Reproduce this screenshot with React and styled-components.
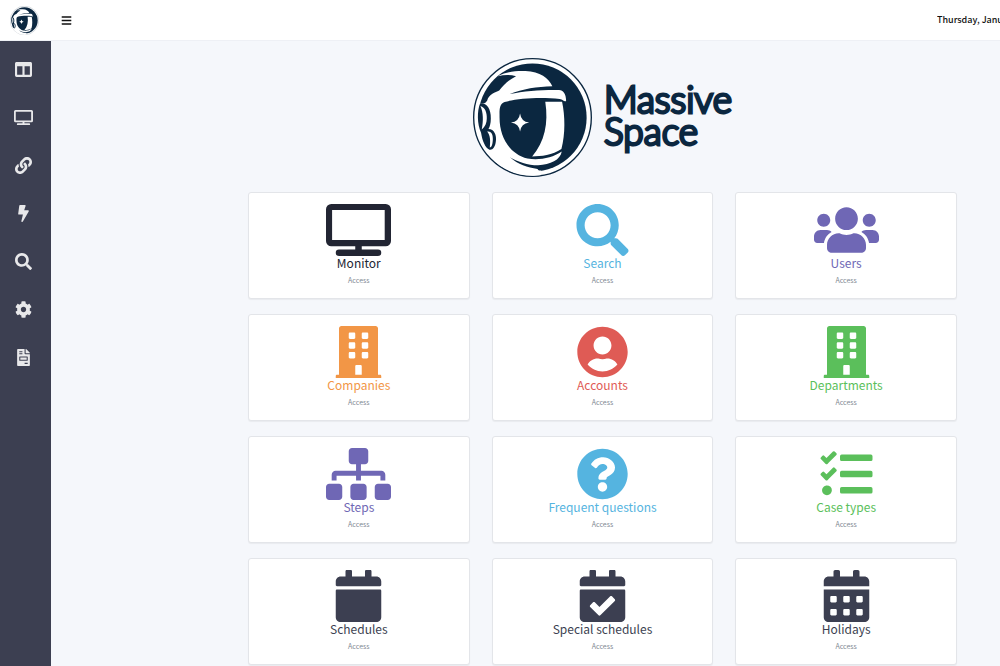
import React from "react";
import styled, { createGlobalStyle } from "styled-components";
import {
  FaBars,
  FaBolt,
  FaBuilding,
  FaCalendar,
  FaCalendarAlt,
  FaCalendarCheck,
  FaCog,
  FaColumns,
  FaFileInvoice,
  FaLink,
  FaQuestionCircle,
  FaSearch,
  FaSitemap,
  FaTasks,
  FaUserCircle,
  FaUsers,
} from "react-icons/fa";

const colors = {
  ink: "#222533",
  slate: "#3c3f51",
  navy: "#0b2740",
  blue: "#55b4e0",
  purple: "#6f67b5",
  orange: "#f29646",
  red: "#df5b55",
  green: "#5bbf5b",
};

const GlobalStyle = createGlobalStyle`
  *, *::before, *::after { box-sizing: border-box; }
  body {
    margin: 0;
    background: #f5f7fb;
    font-family: "Noto Sans CJK SC", "Noto Sans", sans-serif;
  }
`;

const Page = styled.div`
  display: flex;
  flex-direction: column;
  min-height: 100vh;
`;

const Header = styled.header`
  display: flex;
  align-items: center;
  height: 40px;
  padding-left: 10px;
  background: #fff;
`;

const HomeLink = styled.a`
  display: flex;
  margin-right: 22px;
`;

const MenuButton = styled.button`
  display: flex;
  padding: 0;
  border: 0;
  background: none;
  color: #111;
  font-size: 11px;
  cursor: pointer;
`;

const Today = styled.time`
  flex: 0 0 63px;
  margin-left: auto;
  overflow: hidden;
  white-space: nowrap;
  font-size: 9px;
  line-height: 16px;
  font-weight: 500;
  color: #111;
`;

const Body = styled.div`
  display: flex;
  flex: 1;
  border-top: 1px solid #eef0f5;
`;

const Sidebar = styled.nav`
  flex: 0 0 51px;
  display: flex;
  flex-direction: column;
  padding-top: 4px;
  background: ${colors.slate};
`;

const SideLink = styled.a`
  display: flex;
  align-items: center;
  justify-content: center;
  height: 48px;
  padding-right: 4px;
  color: #e8e8ea;

  svg {
    width: 19px;
    height: 17px;
  }
`;

const Main = styled.main`
  flex: 1;
  min-width: 0;
  padding: 17px 43px 1px 197px;
`;

const Brand = styled.div`
  display: flex;
  justify-content: center;
  gap: 12px;
  margin-bottom: 15px;
`;

const BrandName = styled.h1`
  margin: 0;
  padding-top: 25px;
  font-family: Lato, sans-serif;
  font-size: 37px;
  line-height: 32px;
  font-weight: 300;
  color: ${colors.navy};
  -webkit-text-stroke: 3px ${colors.navy};
  stroke-linejoin: round;

  span {
    display: block;
  }
`;

const Grid = styled.div`
  display: grid;
  grid-template-columns: repeat(3, 1fr);
  gap: 15px 22px;
`;

const Card = styled.a`
  display: flex;
  flex-direction: column;
  align-items: center;
  height: 107px;
  padding-top: 11px;
  background: #fff;
  border: 1px solid #e3e5e9;
  border-radius: 3px;
  box-shadow: 0 1px 1px rgba(0, 0, 0, 0.05);
  color: ${(p) => p.$color};
  text-decoration: none;

  svg {
    width: 65px;
    height: 52px;
  }
`;

const CardTitle = styled.span`
  font-size: 12px;
  line-height: 14px;
`;

const CardAction = styled.span`
  margin-top: 4px;
  font-size: 7px;
  line-height: 12px;
  color: #7f8a93;
`;

function MonitorIcon() {
  return (
    <svg viewBox="0 0 640 512" fill="currentColor" aria-hidden="true">
      <path
        fillRule="evenodd"
        d="M52 0H588A52 52 0 0 1 640 52V364A52 52 0 0 1 588 416H352V448H512A32 32 0 0 1 512 512H128A32 32 0 0 1 128 448H288V416H52A52 52 0 0 1 0 364V52A52 52 0 0 1 52 0ZM60 60V354H578V60Z"
      />
    </svg>
  );
}

function Astronaut({ size, outline }) {
  return (
    <svg width={size} height={size} viewBox="38 27 354 354" aria-hidden="true">
      <circle cx="215" cy="204" r="175" fill="#fff" stroke={outline} strokeWidth="4" />
      <circle cx="215" cy="204" r="161" fill={colors.navy} />
      <g fill="#fff">
        <path d="M112 81C138 68 166 65 194 66C238 67 263 88 274 111C228 112 186 119 147 134C190 125 246 121 294 122C307 123 315 133 315 155C308 158 306 150 296 149C240 142 168 147 132 158C115 164 117 184 117 204C117 262 146 312 200 326C236 332 274 324 302 305C298 330 268 344 232 346C200 346 172 336 148 322C172 344 200 352 230 357C232 360 233 362 240 362L239 376C150 385 80 335 56 262C44 214 48 186 58 160C72 166 75 160 80 154C86 134 104 130 116 124C128 108 144 92 166 81C148 76 130 77 112 81Z" />
        <path d="M253 157H303C312 200 313 252 301 298C275 316 240 320 214 320C251 276 263 222 253 157Z" />
        <path d="M178 192Q181 216 205 219Q181 222 178 246Q175 222 151 219Q175 216 178 192Z" />
      </g>
      <g fill={colors.navy}>
        <path d="M59 162C78 160 92 178 91 207C91 222 88 232 84 238C101 238 109 257 106 275C104 293 96 302 87 300C74 293 66 274 62 249C50 222 50 185 59 162Z" />
      </g>
      <g fill="#fff">
        <path d="M60 170C74 174 80 190 79 208C79 220 74 232 64 240C69 214 69 190 60 170Z" />
        <path d="M80 246C93 243 98 256 97 270C96 284 94 292 88 293C90 274 90 258 80 246Z" />
      </g>
    </svg>
  );
}

const sideLinks = [
  { label: "Dashboard", icon: <FaColumns /> },
  { label: "Monitor", icon: <MonitorIcon /> },
  { label: "Links", icon: <FaLink /> },
  { label: "Actions", icon: <FaBolt /> },
  { label: "Search", icon: <FaSearch /> },
  { label: "Settings", icon: <FaCog /> },
  { label: "Reports", icon: <FaFileInvoice /> },
];

const cards = [
  { title: "Monitor", icon: <MonitorIcon />, color: colors.ink },
  { title: "Search", icon: <FaSearch />, color: colors.blue },
  { title: "Users", icon: <FaUsers />, color: colors.purple },
  { title: "Companies", icon: <FaBuilding />, color: colors.orange },
  { title: "Accounts", icon: <FaUserCircle />, color: colors.red },
  { title: "Departments", icon: <FaBuilding />, color: colors.green },
  { title: "Steps", icon: <FaSitemap />, color: colors.purple },
  { title: "Frequent questions", icon: <FaQuestionCircle />, color: colors.blue },
  { title: "Case types", icon: <FaTasks />, color: colors.green },
  { title: "Schedules", icon: <FaCalendar />, color: colors.slate },
  { title: "Special schedules", icon: <FaCalendarCheck />, color: colors.slate },
  { title: "Holidays", icon: <FaCalendarAlt />, color: colors.slate },
];

export default function App() {
  return (
    <Page>
      <GlobalStyle />
      <Header>
        <HomeLink href="#home" aria-label="Home">
          <Astronaut size={29} outline="#8d98a5" />
        </HomeLink>
        <MenuButton type="button" aria-label="Menu">
          <FaBars />
        </MenuButton>
        <Today>Thursday, January</Today>
      </Header>
      <Body>
        <Sidebar>
          {sideLinks.map((link) => (
            <SideLink key={link.label} href="#" aria-label={link.label}>
              {link.icon}
            </SideLink>
          ))}
        </Sidebar>
        <Main>
          <Brand>
            <Astronaut size={119} outline={colors.navy} />
            <BrandName>
              <span>Massive</span>
              <span>Space</span>
            </BrandName>
          </Brand>
          <Grid>
            {cards.map((card) => (
              <Card key={card.title} href="#" $color={card.color}>
                {card.icon}
                <CardTitle>{card.title}</CardTitle>
                <CardAction>Access</CardAction>
              </Card>
            ))}
          </Grid>
        </Main>
      </Body>
    </Page>
  );
}
